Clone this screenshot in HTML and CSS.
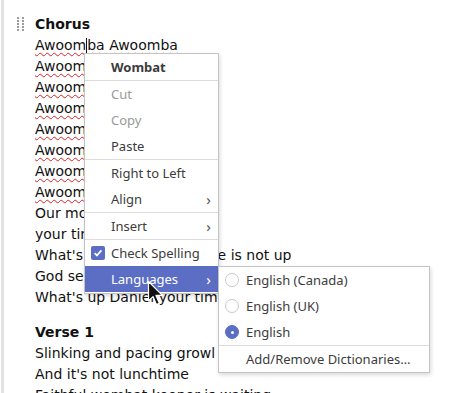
FILE: index.html
```html
<!DOCTYPE html>
<html>
<head>
    <title>Lyrics Editor</title>
    <meta charset="UTF-8">
    <link rel="stylesheet" href="styles.css">
</head>
<body>
    <div class="editor">
        <div class="grip">
            <svg width="8" height="16" viewBox="0 0 8 16">
                <g fill="#9a9a9a">
                    <rect x="0" y="0" width="2" height="2"/><rect x="5" y="0" width="2" height="2"/>
                    <rect x="0" y="3" width="2" height="2"/><rect x="5" y="3" width="2" height="2"/>
                    <rect x="0" y="6" width="2" height="2"/><rect x="5" y="6" width="2" height="2"/>
                    <rect x="0" y="9" width="2" height="2"/><rect x="5" y="9" width="2" height="2"/>
                    <rect x="0" y="12" width="2" height="2"/><rect x="5" y="12" width="2" height="2"/>
                </g>
            </svg>
        </div>

        <div class="stanza">
            <div class="title">Chorus</div>
            <div><span class="misspelt">Awoom</span><span class="caret"></span><span class="misspelt">ba</span> <span class="misspelt">Awoomba</span></div>
            <div><span class="misspelt">Awoomba</span> <span class="misspelt">Awoomba</span></div>
            <div><span class="misspelt">Awoomba</span> <span class="misspelt">Awoomba</span></div>
            <div><span class="misspelt">Awoomba</span> <span class="misspelt">Awoomba</span></div>
            <div><span class="misspelt">Awoomba</span> <span class="misspelt">Awoomba</span></div>
            <div><span class="misspelt">Awoomba</span> <span class="misspelt">Awoomba</span></div>
            <div><span class="misspelt">Awoomba</span> <span class="misspelt">Awoomba</span></div>
            <div><span class="misspelt">Awoomba</span> <span class="misspelt">Awoomba</span></div>
            <div>Our morning wombat</div>
            <div>your time has come</div>
            <div>What's up Daniel your time is not up</div>
            <div>God send you wombat</div>
            <div>What's up Daniel your time is up</div>
        </div>

        <div class="stanza">
            <div class="title">Verse 1</div>
            <div>Slinking and pacing growl at the gate</div>
            <div>And it's not lunchtime</div>
            <div>Faithful wombat keeper is waiting</div>
        </div>
    </div>

    <!-- context menu -->
    <div class="menu main-menu">
        <div class="item heading">Wombat</div>
        <div class="sep"></div>
        <div class="item disabled">Cut</div>
        <div class="item disabled">Copy</div>
        <div class="item">Paste</div>
        <div class="sep"></div>
        <div class="item">Right to Left</div>
        <div class="item">Align<span class="chev">&#8250;</span></div>
        <div class="sep"></div>
        <div class="item">Insert<span class="chev">&#8250;</span></div>
        <div class="sep"></div>
        <div class="item"><span class="check">
            <svg width="12" height="12" viewBox="0 0 12 12"><path d="M2.6 6.2 L5 8.4 L9.4 3.4" stroke="#fff" stroke-width="1.8" fill="none"/></svg>
        </span>Check Spelling</div>
        <div class="item active">Languages<span class="chev">&#8250;</span></div>
    </div>

    <div class="menu sub-menu">
        <div class="item"><span class="radio"></span>English (Canada)</div>
        <div class="item"><span class="radio"></span>English (UK)</div>
        <div class="item"><span class="radio on"></span>English</div>
        <div class="sep"></div>
        <div class="item">Add/Remove Dictionaries…</div>
    </div>

    <svg class="pointer" width="18" height="27" viewBox="0 0 18 27">
        <path d="M1.5 1.5 L1.5 21 L6 16.6 L9.4 24.6 L12.4 23.3 L9 15.4 L15.4 15.4 Z" fill="#111" stroke="#fff" stroke-width="1.2" stroke-linejoin="round"/>
    </svg>
</body>
</html>
```

FILE: styles.css
```css
body {
    margin: 0;
    background-color: #fff;
    font-family: "DejaVu Sans", sans-serif;
    overflow: hidden;
}
.editor {
    margin-left: 1px;
    border-left: 3px solid #e2e2e2;
    padding: 14px 0 0 31px;
    font-size: 14px;
    line-height: 21px;
    color: #111;
    position: relative;
    white-space: nowrap;
}
.grip {
    position: absolute;
    left: 13px;
    top: 17px;
}
.grip svg {
    display: block;
}
.stanza {
    margin-bottom: 14px;
}
.title {
    font-weight: bold;
}
.misspelt {
    text-decoration: underline wavy #e02020;
    text-decoration-thickness: 1px;
    text-decoration-skip-ink: none;
    text-underline-offset: 2px;
}
.caret {
    display: inline-block;
    width: 1px;
    height: 15px;
    background-color: #111;
    vertical-align: -3px;
}
.menu {
    position: absolute;
    background-color: #fff;
    border: 1px solid #c4c4c4;
    box-shadow: 1px 2px 4px rgba(0, 0, 0, 0.15);
    font-family: "Noto Sans", sans-serif;
    font-size: 13px;
    color: #3c3c3c;
}
.main-menu {
    left: 84px;
    top: 53px;
    width: 133px;
    padding-bottom: 1px;
}
.sub-menu {
    left: 218px;
    top: 266px;
    width: 210px;
}
.item {
    height: 26px;
    display: flex;
    align-items: center;
    padding-left: 26px;
    position: relative;
}
.sub-menu .item {
    padding-left: 27px;
}
.heading {
    font-weight: bold;
}
.disabled {
    color: #9a9a9a;
}
.sep {
    height: 1px;
    background-color: #dcdcdc;
}
.chev {
    position: absolute;
    right: 7px;
    font-size: 15px;
    color: #555;
}
.active {
    background-color: #5b6ec4;
    color: #fff;
}
.active .chev {
    color: #fff;
}
.check {
    position: absolute;
    left: 6px;
    width: 14px;
    height: 14px;
    border-radius: 2px;
    background-color: #5b6ec4;
    display: flex;
    align-items: center;
    justify-content: center;
}
.radio {
    position: absolute;
    left: 6px;
    width: 12px;
    height: 12px;
    border: 1px solid #c8c8c8;
    border-radius: 50%;
}
.radio.on {
    background-color: #5b6ec4;
    border-color: #5b6ec4;
}
.radio.on::after {
    content: "";
    position: absolute;
    left: 4.5px;
    top: 4.5px;
    width: 3px;
    height: 3px;
    border-radius: 50%;
    background-color: #fff;
}
.pointer {
    position: absolute;
    left: 147px;
    top: 280px;
}
```
